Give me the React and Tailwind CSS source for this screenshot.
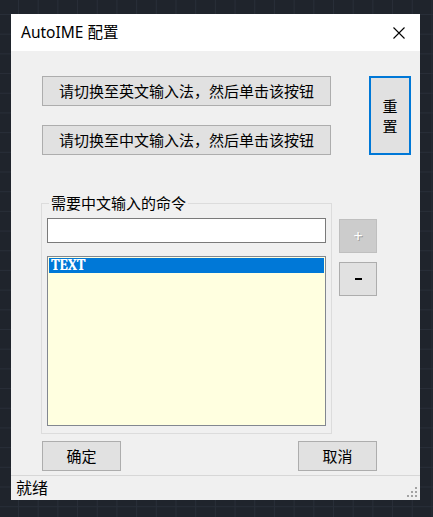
import React from "react";

const cjk = "font-['Noto_Sans','Noto_Sans_CJK_SC',sans-serif]";

function Btn({ className = "", children }) {
  return (
    <button
      className={`flex items-center justify-center border border-[#adadad] bg-[#e1e1e1] text-[15px] leading-none text-black ${className}`}
    >
      {children}
    </button>
  );
}

function CloseIcon() {
  return (
    <svg width="12" height="12" viewBox="0 0 12 12" fill="none" stroke="#000" strokeWidth="1.1">
      <path d="M0.5 0.5 L11.5 11.5 M11.5 0.5 L0.5 11.5" />
    </svg>
  );
}

function Grip() {
  return (
    <svg width="10" height="10" viewBox="0 0 10 10" fill="#a3a3a3">
      <rect x="8" y="0" width="2" height="2" />
      <rect x="4" y="4" width="2" height="2" />
      <rect x="8" y="4" width="2" height="2" />
      <rect x="0" y="8" width="2" height="2" />
      <rect x="4" y="8" width="2" height="2" />
      <rect x="8" y="8" width="2" height="2" />
    </svg>
  );
}

export default function App() {
  return (
    <div
      className={`w-[433px] h-[517px] overflow-hidden pl-[11px] pt-[14px] bg-[#1f242c] bg-[linear-gradient(to_right,#282e38_1px,transparent_1px),linear-gradient(to_bottom,#282e38_1px,transparent_1px)] bg-[size:19.7px_19.7px] bg-[position:18px_14px] ${cjk}`}
    >
      {/* 窗口 */}
      <div className="w-[409px] h-[486px] flex flex-col bg-[#f0f0f0]">
        {/* 标题栏 */}
        <div className="h-[37px] bg-white flex items-center justify-between pl-[10px] pr-[15px]">
          <span className="text-[15.5px] text-black leading-none">AutoIME 配置</span>
          <CloseIcon />
        </div>

        {/* 上方按钮 */}
        <div className="flex pl-[31px] pt-[25px]">
          <div className="flex flex-col gap-[19px]">
            <Btn className="w-[289px] h-[30px]">请切换至英文输入法，然后单击该按钮</Btn>
            <Btn className="w-[289px] h-[30px]">请切换至中文输入法，然后单击该按钮</Btn>
          </div>
          <button className="ml-[38px] w-[42px] h-[79px] border-2 border-[#0078d7] bg-[#e1e1e1] flex flex-col items-center justify-center text-[15px] leading-[20px] text-black">
            <span>重</span>
            <span>置</span>
          </button>
        </div>

        {/* 命令分组 */}
        <div className="flex items-start pl-[30px] mt-[48px]">
          <div className="relative w-[291px] h-[231px] border border-[#dcdcdc] pt-[14px] px-[5px]">
            <span className="absolute left-[7px] top-[-11px] bg-[#f0f0f0] px-[2px] text-[15px] leading-[20px] text-black">
              需要中文输入的命令
            </span>
            <div className="h-[25px] border border-[#7a7a7a] bg-white" />
            <div className="mt-[13px] h-[170px] border border-[#828790] bg-[#ffffe0] p-px">
              <div className="h-[15px] bg-[#0078d7] pl-[2px] text-white font-serif font-bold text-[15px] leading-[15px] tracking-[-0.2px]">
                TEXT
              </div>
            </div>
          </div>
          <div className="ml-[7px] mt-[16px] flex flex-col gap-[9px]">
            <button className="w-[38px] h-[34px] border border-[#bfbfbf] bg-[#cccccc] flex items-center justify-center text-[16px] leading-none text-white [text-shadow:1px_1px_0_#9a9a9a]">
              +
            </button>
            <button className="w-[38px] h-[34px] border border-[#adadad] bg-[#e1e1e1] flex items-center justify-center">
              <span className="block w-[7px] h-[2px] bg-black" />
            </button>
          </div>
        </div>

        {/* 确定 / 取消 */}
        <div className="flex justify-between w-[366px] pl-[31px] mt-[7px]">
          <Btn className="w-[79px] h-[30px]">确定</Btn>
          <Btn className="w-[79px] h-[30px]">取消</Btn>
        </div>

        {/* 状态栏 */}
        <div className="mt-auto h-[25px] border-t border-[#d7d7d7] flex items-center justify-between pl-[5px] pr-[3px]">
          <span className="text-[16px] leading-none text-black">就绪</span>
          <div className="self-end mb-[3px]">
            <Grip />
          </div>
        </div>
      </div>
    </div>
  );
}
